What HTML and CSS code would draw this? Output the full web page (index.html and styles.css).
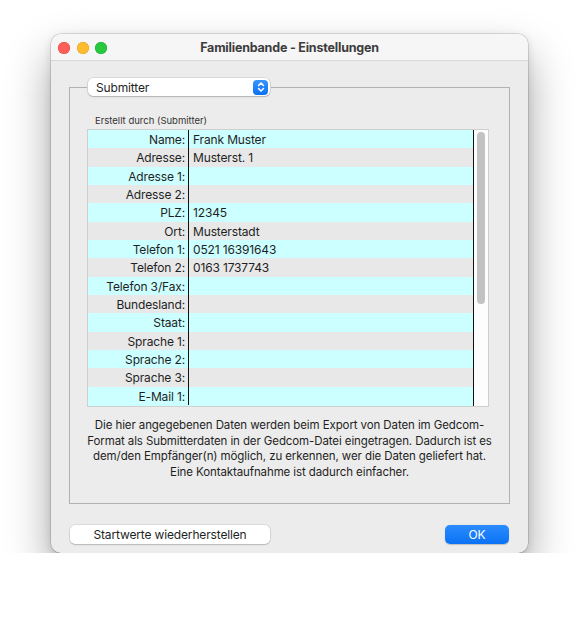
FILE: index.html
```html
<!DOCTYPE html>
<html lang="de">
<head>
<meta charset="utf-8">
<title>Familienbande - Einstellungen</title>
<link rel="stylesheet" href="styles.css">
</head>
<body>
<div class="window">
  <div class="titlebar">
    <div class="lights">
      <span class="light red"></span>
      <span class="light yellow"></span>
      <span class="light green"></span>
    </div>
    <div class="title">Familienbande - Einstellungen</div>
    <div></div>
  </div>
  <div class="content">
    <fieldset class="group">
      <legend class="group-legend">
        <div class="popup">
          <span class="popup-text">Submitter</span>
          <span class="stepper">
            <svg width="10" height="12" viewBox="0 0 10 12"><path d="M2.5 4.5 L5 2 L7.5 4.5 M2.5 7.5 L5 10 L7.5 7.5" fill="none" stroke="#fff" stroke-width="1.5" stroke-linecap="round" stroke-linejoin="round"/></svg>
          </span>
        </div>
      </legend>
      <div class="caption">Erstellt durch (Submitter)</div>
      <div class="table-wrap">
        <div class="rows">
          <div class="row"><div class="label">Name:</div><div class="value">Frank Muster</div></div>
          <div class="row"><div class="label">Adresse:</div><div class="value">Musterst. 1</div></div>
          <div class="row"><div class="label">Adresse 1:</div><div class="value"></div></div>
          <div class="row"><div class="label">Adresse 2:</div><div class="value"></div></div>
          <div class="row"><div class="label">PLZ:</div><div class="value">12345</div></div>
          <div class="row"><div class="label">Ort:</div><div class="value">Musterstadt</div></div>
          <div class="row"><div class="label">Telefon 1:</div><div class="value">0521 16391643</div></div>
          <div class="row"><div class="label">Telefon 2:</div><div class="value">0163 1737743</div></div>
          <div class="row"><div class="label">Telefon 3/Fax:</div><div class="value"></div></div>
          <div class="row"><div class="label">Bundesland:</div><div class="value"></div></div>
          <div class="row"><div class="label">Staat:</div><div class="value"></div></div>
          <div class="row"><div class="label">Sprache 1:</div><div class="value"></div></div>
          <div class="row"><div class="label">Sprache 2:</div><div class="value"></div></div>
          <div class="row"><div class="label">Sprache 3:</div><div class="value"></div></div>
          <div class="row"><div class="label">E-Mail 1:</div><div class="value"></div></div>
        </div>
        <div class="scrollbar"><div class="thumb"></div></div>
      </div>
      <p class="desc">Die hier angegebenen Daten werden beim Export von Daten im Gedcom-<br>Format als Submitterdaten in der Gedcom-Datei eingetragen. Dadurch ist es<br>dem/den Empfänger(n) möglich, zu erkennen, wer die Daten geliefert hat.<br>Eine Kontaktaufnahme ist dadurch einfacher.</p>
    </fieldset>
    <div class="buttons">
      <button class="btn btn-reset">Startwerte wiederherstellen</button>
      <button class="btn btn-ok">OK</button>
    </div>
  </div>
</div>
</body>
</html>
```
FILE: styles.css
```css
* { box-sizing: border-box; }
html, body { margin: 0; padding: 0; background: #ffffff; }
body {
  font-family: Inter, "Noto Sans", "Liberation Sans", sans-serif;
  color: #1f1f1f;
  padding: 34px 0 0 51px;
}
.window {
  width: 477px;
  height: 519px;
  background: #ececec;
  border-radius: 10px;
  box-shadow: 0 0 0 0.5px rgba(0,0,0,0.22), 0 22px 44px rgba(0,0,0,0.36), 0 2px 8px rgba(0,0,0,0.12);
}
.titlebar {
  height: 27px;
  background: #f6f6f6;
  border-bottom: 1px solid #d9d9d9;
  border-radius: 10px 10px 0 0;
  display: grid;
  grid-template-columns: 1fr auto 1fr;
  align-items: center;
}
.lights { display: flex; gap: 6.5px; padding-left: 7px; padding-top: 1px; }
.light { width: 12px; height: 12px; border-radius: 50%; display: block; }
.red { background: #ff5f57; box-shadow: inset 0 0 0 0.5px #e0443e; }
.yellow { background: #febc2e; box-shadow: inset 0 0 0 0.5px #dea123; }
.green { background: #28c840; box-shadow: inset 0 0 0 0.5px #1aab29; }
.title { font-size: 12.5px; font-weight: 700; color: #3d3d3d; letter-spacing: -0.2px; padding-top: 1px; }
.content { padding: 17px 18px 0 18px; }
.group {
  margin: 0;
  padding: 0;
  border: 1px solid #b2b2b2;
  height: 426px;
}
.group-legend { padding: 0 1px; margin-left: 17px; height: 18px; }
.popup {
  width: 182px;
  height: 18px;
  background: #ffffff;
  border-radius: 5px;
  box-shadow: 0 0 0 0.5px rgba(0,0,0,0.16), 0 1px 1.5px rgba(0,0,0,0.18);
  display: flex;
  align-items: center;
  justify-content: space-between;
  padding: 0 2px 0 8px;
  font-size: 12px;
  letter-spacing: -0.15px;
  color: #1f1f1f;
}
.stepper {
  width: 15px;
  height: 15px;
  border-radius: 4px;
  background: linear-gradient(#3a95ff, #0a6ff0);
  display: flex;
  align-items: center;
  justify-content: center;
}
.caption { font-size: 9.5px; line-height: 12px; margin: 19px 0 2px 25px; color: #333; }
.table-wrap {
  margin-left: 17px;
  width: 402px;
  height: 278px;
  border: 1px solid #cfcfcf;
  display: flex;
}
.rows {
  width: 386px;
  background: #ccffff;
  border-right: 1px solid #111;
}
.row { display: flex; height: 18.33px; font-size: 12px; letter-spacing: -0.15px; line-height: 17.33px; padding-top: 1px; }
.row:nth-child(odd) { background: #ccffff; }
.row:nth-child(even) { background: #e8e8e8; }
.label {
  width: 101px;
  border-right: 1px solid #111;
  margin-top: -1px;
  padding-top: 1px;
  text-align: right;
  padding-right: 3px;
  white-space: nowrap;
}
.value { padding-left: 4px; white-space: nowrap; }
.scrollbar { flex: 1; background: #fdfdfd; padding: 2px 0 0 3px; }
.thumb { width: 8px; height: 172px; border-radius: 4px; background: #c2c2c2; }
.desc {
  margin: 11px 0 0 0;
  text-align: center;
  font-size: 11.5px;
  letter-spacing: -0.1px;
  line-height: 15.6px;
  white-space: nowrap;
  color: #1f1f1f;
}
.buttons {
  display: flex;
  justify-content: space-between;
  padding: 21px 1px 0 1px;
}
.btn {
  font-family: inherit;
  font-size: 12px;
  letter-spacing: -0.15px;
  height: 19px;
  border: none;
  border-radius: 5px;
  padding: 0;
  line-height: 19px;
}
.btn-reset {
  width: 200px;
  background: #ffffff;
  color: #1f1f1f;
  box-shadow: 0 0 0 0.5px rgba(0,0,0,0.14), 0 1px 1.5px rgba(0,0,0,0.16);
}
.btn-ok {
  width: 64px;
  background: linear-gradient(#2b8cff, #0b72f5);
  color: #ffffff;
  box-shadow: 0 0.5px 1px rgba(0,0,0,0.2);
}
```
